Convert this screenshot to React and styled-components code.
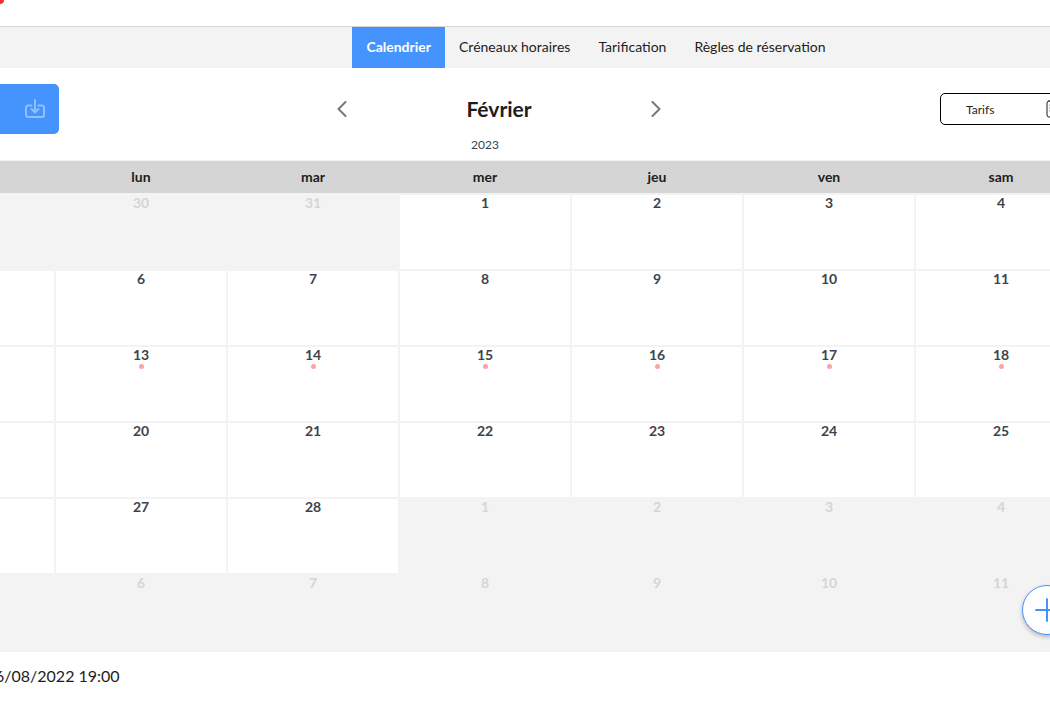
import React, { useState } from "react";
import styled, { createGlobalStyle } from "styled-components";

const TABS = ["Calendrier", "Créneaux horaires", "Tarification", "Règles de réservation"];

const DAYS = ["dim", "lun", "mar", "mer", "jeu", "ven", "sam"];

const BUSY = [13, 14, 15, 16, 17, 18];

// six weeks, starting from the last sunday of january
const buildWeeks = () => {
  const weeks = [];
  for (let w = 0; w < 6; w++) {
    const week = [];
    for (let d = 0; d < 7; d++) {
      const date = new Date(2023, 0, 29 + w * 7 + d);
      week.push({ day: date.getDate(), out: date.getMonth() !== 1 });
    }
    weeks.push(week);
  }
  return weeks;
};

const App = () => {
  const [tab, setTab] = useState(TABS[0]);

  return (
    <>
      <GlobalStyle />
      <TopBar>
        <Badge />
      </TopBar>
      <Nav>
        {TABS.map((name) => (
          <Tab key={name} $active={name === tab} onClick={() => setTab(name)}>
            {name}
          </Tab>
        ))}
      </Nav>
      <Content>
        <Toolbar>
          <ImportButton aria-label="Importer">
            <svg width="20" height="20" viewBox="0 0 20 20">
              <path d="M6.5 6.5H3a2 2 0 0 0-2 2V16a2 2 0 0 0 2 2h14a2 2 0 0 0 2-2V8.5a2 2 0 0 0-2-2h-3.5M10 1v12M6.5 10l3.5 3.5 3.5-3.5" />
            </svg>
          </ImportButton>
          <Period>
            <MonthRow>
              <Arrow aria-label="Mois précédent">
                <svg width="10" height="16" viewBox="0 0 10 16">
                  <path d="M8.5 1L1.5 8l7 7" />
                </svg>
              </Arrow>
              <Month>Février</Month>
              <Arrow aria-label="Mois suivant">
                <svg width="10" height="16" viewBox="0 0 10 16">
                  <path d="M1.5 1l7 7-7 7" />
                </svg>
              </Arrow>
            </MonthRow>
            <Year>2023</Year>
          </Period>
          <PriceButton>
            Tarifs
            <svg width="16" height="18" viewBox="0 0 16 18">
              <rect x="1" y="1" width="14" height="16" rx="2" />
              <path d="M4 5h8M4 8h8M4 11h5" />
            </svg>
          </PriceButton>
        </Toolbar>
        <Calendar>
          <thead>
            <tr>
              {DAYS.map((day) => (
                <DayName key={day}>{day}</DayName>
              ))}
            </tr>
          </thead>
          <tbody>
            {buildWeeks().map((week, i) => (
              <tr key={i}>
                {week.map(({ day, out }) => (
                  <Cell key={day} $out={out}>
                    {day}
                    {!out && BUSY.includes(day) && <Dot />}
                  </Cell>
                ))}
              </tr>
            ))}
          </tbody>
        </Calendar>
        <Updated>6/08/2022 19:00</Updated>
      </Content>
      <AddButton aria-label="Ajouter">
        <svg width="24" height="24" viewBox="0 0 24 24">
          <path d="M12 1v22M1 12h22" />
        </svg>
      </AddButton>
    </>
  );
};

export default App;

const GlobalStyle = createGlobalStyle`
  * {
    box-sizing: border-box;
  }
  body {
    margin: 0;
    overflow-x: hidden;
    background-color: #fff;
    color: #1d1d1d;
    font-family: Lato, "Liberation Sans", sans-serif;
    font-size: 14px;
  }
  button {
    padding: 0;
    border: 0;
    background: none;
    color: inherit;
    font: inherit;
    cursor: pointer;
  }
  svg {
    display: block;
    fill: none;
    stroke: currentColor;
    stroke-linecap: round;
    stroke-linejoin: round;
  }
`;

const TopBar = styled.header`
  position: relative;
  height: 27px;
  border-bottom: 1px solid #d5d5d5;
`;

const Badge = styled.span`
  position: absolute;
  top: -12px;
  left: -12px;
  width: 16px;
  height: 16px;
  border-radius: 4px;
  background-color: #fb2c2c;
`;

const Nav = styled.nav`
  display: flex;
  justify-content: center;
  height: 41px;
  padding-left: 142px;
  background-color: #f3f3f3;
`;

const Tab = styled.button`
  && {
    padding: 0 14px 2px;
    background-color: ${({ $active }) => ($active ? "#4593fc" : "transparent")};
    color: ${({ $active }) => ($active ? "#fff" : "#1d1d1d")};
    font-weight: ${({ $active }) => ($active ? 700 : 400)};
    white-space: nowrap;
  }
`;

const Content = styled.main`
  margin: 0 -36px 0 -118px;
`;

const Toolbar = styled.div`
  display: grid;
  grid-template-columns: 1fr auto 1fr;
  align-items: start;
  height: 93px;
  padding-top: 16px;
  border-bottom: 1px solid #f3f3f3;
`;

const ImportButton = styled.button`
  && {
    display: flex;
    align-items: center;
    justify-content: flex-end;
    width: 177px;
    height: 50px;
    padding-right: 14px;
    border-radius: 5px;
    background-color: #4593fc;
    color: #8cc3ff;
  }
  svg {
    stroke-width: 2;
  }
`;

const Period = styled.div`
  text-align: center;
`;

const MonthRow = styled.div`
  display: flex;
  align-items: center;
  justify-content: space-between;
  width: 354px;
  height: 50px;
  padding-left: 30px;
`;

const Arrow = styled.button`
  && {
    color: #777;
  }
  svg {
    stroke-width: 2;
  }
`;

const Month = styled.h1`
  margin: 0;
  font-size: 21px;
  line-height: 24px;
  font-weight: 700;
`;

const Year = styled.div`
  padding: 4px 0 0 2px;
  color: #3b444d;
  font-size: 12px;
  line-height: 14px;
`;

const PriceButton = styled.button`
  && {
    display: flex;
    align-items: center;
    justify-content: space-between;
    justify-self: end;
    width: 146px;
    height: 32px;
    margin-top: 9px;
    padding: 0 23px 0 25px;
    border: 1px solid #000;
    border-radius: 5px;
    font-size: 12px;
  }
`;

const Calendar = styled.table`
  width: 100%;
  table-layout: fixed;
  border-spacing: 0;
  background-color: #f3f3f3;
`;

const DayName = styled.th`
  height: 32px;
  padding: 0 0 2px 2px;
  background-color: #d5d5d5;
  font-weight: 700;
`;

const Cell = styled.td`
  height: 76px;
  padding: 0;
  border-top: 2px solid #f3f3f3;
  border-left: 2px solid #f3f3f3;
  background-color: ${({ $out }) => ($out ? "#f3f3f3" : "#fff")};
  color: ${({ $out }) => ($out ? "#d5d5d5" : "#3b444d")};
  font-weight: 700;
  line-height: 16px;
  text-align: center;
  vertical-align: top;
  tr:last-child > & {
    height: 79px;
  }
`;

const Dot = styled.div`
  width: 5px;
  height: 5px;
  margin: 1px auto 0;
  border-radius: 50%;
  background-color: #f9a3a3;
`;

const Updated = styled.p`
  margin: 0;
  padding: 14px 0 0 113px;
  font-size: 16px;
  line-height: 20px;
`;

const AddButton = styled.button`
  && {
    position: fixed;
    right: -22px;
    bottom: 66px;
    display: flex;
    align-items: center;
    justify-content: center;
    width: 50px;
    height: 50px;
    border: 1px solid #4593fc;
    border-radius: 50%;
    background-color: #fff;
    box-shadow: 0 2px 4px rgba(0, 0, 0, 0.25);
    color: #4593fc;
  }
  svg {
    stroke-width: 2;
  }
`;
